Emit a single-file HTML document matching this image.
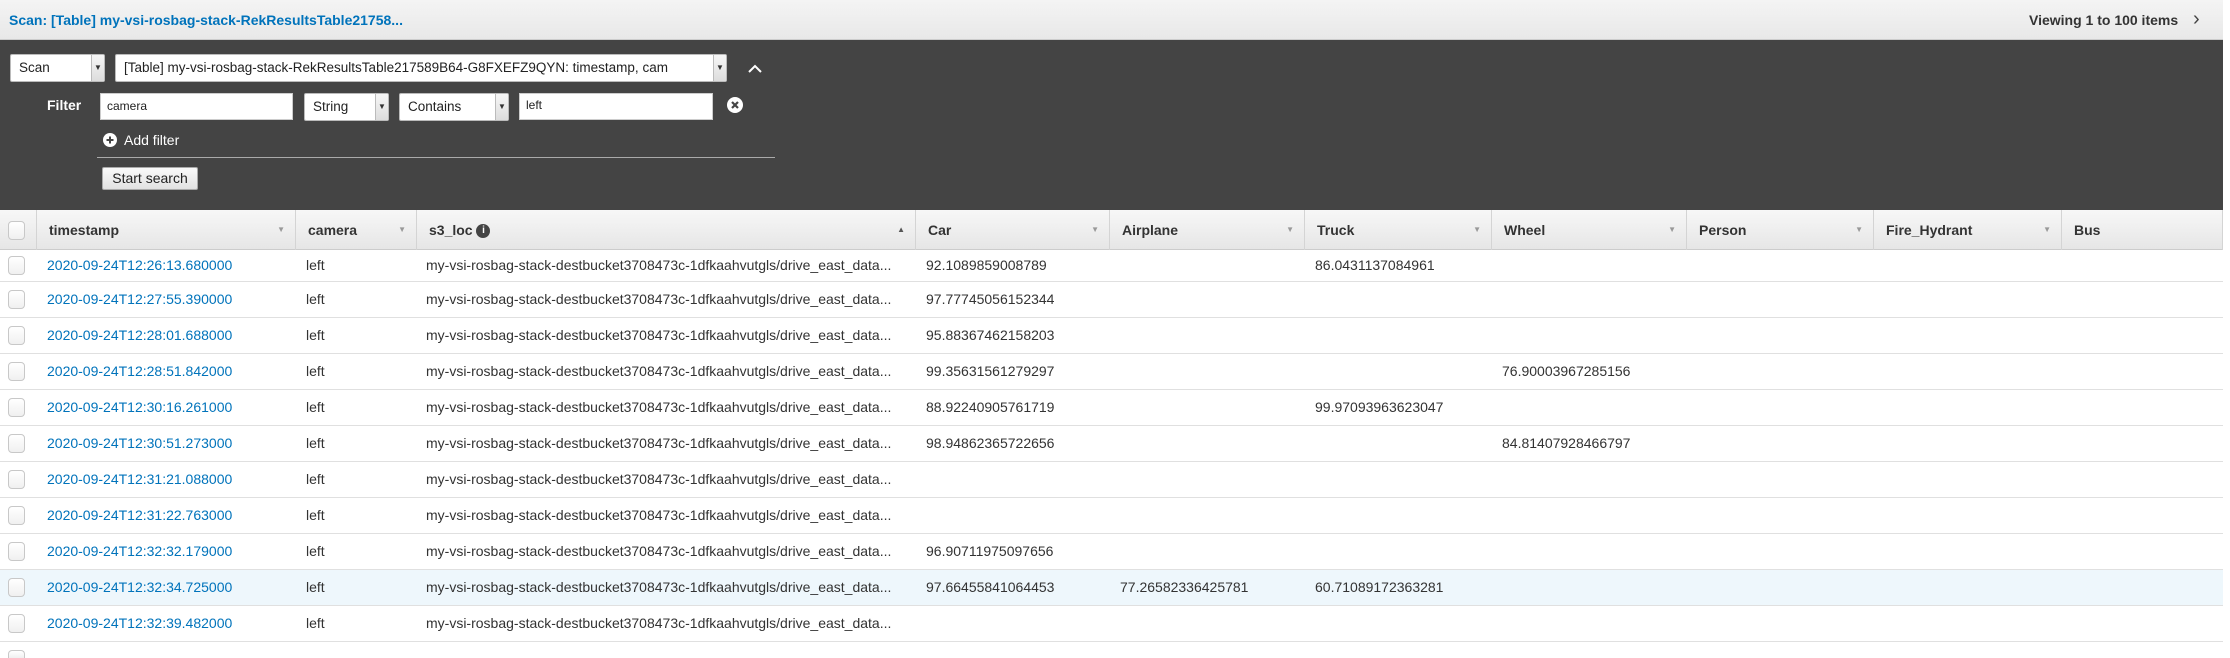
<!DOCTYPE html>
<html style="height:658px;overflow:hidden"><head><style>
*{box-sizing:border-box;margin:0;padding:0}
body{width:2230px;height:658px;overflow:hidden;background:#fff;font-family:"Liberation Sans",Arial,sans-serif;font-size:14px;color:#333;position:relative}
.abs{position:absolute}
.top{left:0;top:0;width:2223px;height:40px;background:linear-gradient(#f4f4f4,#e8e8e8);border-bottom:1px solid #ccc}
.dark{left:0;top:40px;width:2223px;height:170px;background:#444}
.sel{background:#fff;border:1px solid #bbb;border-radius:2px;height:28px;line-height:26px;padding-left:8px;font-size:13.5px;color:#222;overflow:hidden;white-space:nowrap}
.sel .c{position:absolute;right:0;top:0;width:13px;height:26px;background:linear-gradient(#f6f6f6,#ddd);border-left:1px solid #bbb;font-size:8px;text-align:center;line-height:26px;color:#333}
.inp{background:#fff;border:1px solid #ccc;height:27px;line-height:25px;padding-left:6px;font-size:12px;color:#222}
.hdr{left:0;top:210px;width:2223px;height:40px;background:linear-gradient(#f7f7f7,#e6e6e6);border-bottom:1px solid #ccc}
.hc{position:absolute;top:0;height:40px;border-left:1px solid #d4d4d4;font-weight:bold;line-height:40px;padding-left:12px;color:#333}
.hc .a{position:absolute;right:10px;top:0;font-size:8px;color:#999;font-weight:normal}
.row{position:absolute;left:0;width:2223px;height:36px;border-bottom:1px solid #e0e0e0}
.row span{position:absolute;top:0;line-height:35px;white-space:nowrap}
.cb{position:absolute;left:8px;width:17px;height:19px;border:1px solid #c8c8c8;border-radius:4px;background:linear-gradient(#fff,#f0f0f0)}
.lk{color:#0073bb}
</style></head><body>
<div class="abs top"></div>
<div class="abs" style="left:9px;top:12px;color:#0073bb;font-weight:bold;font-size:14px">Scan: [Table] my-vsi-rosbag-stack-RekResultsTable21758...</div>
<div class="abs" style="left:2029px;top:12px;font-weight:bold;font-size:14px;color:#333">Viewing 1 to 100 items</div>
<div class="abs" style="left:2193px;top:8px;font-size:20px;color:#444">&#8250;</div>
<div class="abs dark"></div>
<div class="abs sel" style="left:10px;top:54px;width:95px">Scan<div class="c">▼</div></div>
<div class="abs sel" style="left:115px;top:54px;width:612px">[Table] my-vsi-rosbag-stack-RekResultsTable217589B64-G8FXEFZ9QYN: timestamp, cam<div class="c">▼</div></div>
<svg class="abs" style="left:748px;top:64px" width="14" height="10"><path d="M1 8 L7 2 L13 8" stroke="#fff" stroke-width="2" fill="none"/></svg>
<div class="abs" style="left:47px;top:97px;color:#fff;font-weight:bold;font-size:14px">Filter</div>
<div class="abs inp" style="left:100px;top:93px;width:193px">camera</div>
<div class="abs sel" style="left:304px;top:93px;width:85px;height:28px">String<div class="c">▼</div></div>
<div class="abs sel" style="left:399px;top:93px;width:110px;height:28px">Contains<div class="c">▼</div></div>
<div class="abs inp" style="left:519px;top:93px;width:194px;line-height:22px">left</div>
<svg class="abs" style="left:727px;top:97px" width="16" height="16"><circle cx="8" cy="8" r="8" fill="#fff"/><path d="M5 5L11 11M11 5L5 11" stroke="#444" stroke-width="2.2"/></svg>
<svg class="abs" style="left:103px;top:133px" width="14" height="14"><circle cx="7" cy="7" r="7" fill="#fff"/><path d="M7 3.5V10.5M3.5 7H10.5" stroke="#444" stroke-width="2"/></svg>
<div class="abs" style="left:124px;top:132px;color:#fff;font-size:14px">Add filter</div>
<div class="abs" style="left:97px;top:157px;width:678px;height:1px;background:#aaa"></div>
<div class="abs" style="left:102px;top:167px;width:96px;height:23px;background:linear-gradient(#fafafa,#e2e2e2);border:1px solid #aaa;border-radius:2px;font-size:14px;line-height:21px;text-align:center;color:#222">Start search</div>
<div class="abs hdr">
<div class="cb" style="top:11px"></div>
<div class="hc" style="left:36px;width:259px">timestamp<span class="a">▼</span></div>
<div class="hc" style="left:295px;width:121px">camera<span class="a">▼</span></div>
<div class="hc" style="left:416px;width:499px">s3_loc <span style="display:inline-block;width:14px;height:14px;border-radius:7px;background:#444;color:#fff;font-size:10px;line-height:14px;text-align:center;vertical-align:middle">i</span><span class="a" style="color:#555">▲</span></div>
<div class="hc" style="left:915px;width:194px">Car<span class="a">▼</span></div>
<div class="hc" style="left:1109px;width:195px">Airplane<span class="a">▼</span></div>
<div class="hc" style="left:1304px;width:187px">Truck<span class="a">▼</span></div>
<div class="hc" style="left:1491px;width:195px">Wheel<span class="a">▼</span></div>
<div class="hc" style="left:1686px;width:187px">Person<span class="a">▼</span></div>
<div class="hc" style="left:1873px;width:188px">Fire_Hydrant<span class="a">▼</span></div>
<div class="hc" style="left:2061px;width:162px;border-right:1px solid #d4d4d4">Bus</div>
</div>
<div class="row" style="top:250px;height:32px"><div class="cb" style="top:6px"></div><span class="lk" style="left:47px;line-height:31px">2020-09-24T12:26:13.680000</span><span style="left:306px;line-height:31px">left</span><span style="left:426px;line-height:31px">my-vsi-rosbag-stack-destbucket3708473c-1dfkaahvutgls/drive_east_data...</span><span style="left:926px;line-height:31px">92.1089859008789</span><span style="left:1315px;line-height:31px">86.0431137084961</span></div>
<div class="row" style="top:282px"><div class="cb" style="top:8px"></div><span class="lk" style="left:47px">2020-09-24T12:27:55.390000</span><span style="left:306px">left</span><span style="left:426px">my-vsi-rosbag-stack-destbucket3708473c-1dfkaahvutgls/drive_east_data...</span><span style="left:926px">97.77745056152344</span></div>
<div class="row" style="top:318px"><div class="cb" style="top:8px"></div><span class="lk" style="left:47px">2020-09-24T12:28:01.688000</span><span style="left:306px">left</span><span style="left:426px">my-vsi-rosbag-stack-destbucket3708473c-1dfkaahvutgls/drive_east_data...</span><span style="left:926px">95.88367462158203</span></div>
<div class="row" style="top:354px"><div class="cb" style="top:8px"></div><span class="lk" style="left:47px">2020-09-24T12:28:51.842000</span><span style="left:306px">left</span><span style="left:426px">my-vsi-rosbag-stack-destbucket3708473c-1dfkaahvutgls/drive_east_data...</span><span style="left:926px">99.35631561279297</span><span style="left:1502px">76.90003967285156</span></div>
<div class="row" style="top:390px"><div class="cb" style="top:8px"></div><span class="lk" style="left:47px">2020-09-24T12:30:16.261000</span><span style="left:306px">left</span><span style="left:426px">my-vsi-rosbag-stack-destbucket3708473c-1dfkaahvutgls/drive_east_data...</span><span style="left:926px">88.92240905761719</span><span style="left:1315px">99.97093963623047</span></div>
<div class="row" style="top:426px"><div class="cb" style="top:8px"></div><span class="lk" style="left:47px">2020-09-24T12:30:51.273000</span><span style="left:306px">left</span><span style="left:426px">my-vsi-rosbag-stack-destbucket3708473c-1dfkaahvutgls/drive_east_data...</span><span style="left:926px">98.94862365722656</span><span style="left:1502px">84.81407928466797</span></div>
<div class="row" style="top:462px"><div class="cb" style="top:8px"></div><span class="lk" style="left:47px">2020-09-24T12:31:21.088000</span><span style="left:306px">left</span><span style="left:426px">my-vsi-rosbag-stack-destbucket3708473c-1dfkaahvutgls/drive_east_data...</span></div>
<div class="row" style="top:498px"><div class="cb" style="top:8px"></div><span class="lk" style="left:47px">2020-09-24T12:31:22.763000</span><span style="left:306px">left</span><span style="left:426px">my-vsi-rosbag-stack-destbucket3708473c-1dfkaahvutgls/drive_east_data...</span></div>
<div class="row" style="top:534px"><div class="cb" style="top:8px"></div><span class="lk" style="left:47px">2020-09-24T12:32:32.179000</span><span style="left:306px">left</span><span style="left:426px">my-vsi-rosbag-stack-destbucket3708473c-1dfkaahvutgls/drive_east_data...</span><span style="left:926px">96.90711975097656</span></div>
<div class="row" style="top:570px;background:#eef7fc"><div class="cb" style="top:8px"></div><span class="lk" style="left:47px">2020-09-24T12:32:34.725000</span><span style="left:306px">left</span><span style="left:426px">my-vsi-rosbag-stack-destbucket3708473c-1dfkaahvutgls/drive_east_data...</span><span style="left:926px">97.66455841064453</span><span style="left:1120px">77.26582336425781</span><span style="left:1315px">60.71089172363281</span></div>
<div class="row" style="top:606px"><div class="cb" style="top:8px"></div><span class="lk" style="left:47px">2020-09-24T12:32:39.482000</span><span style="left:306px">left</span><span style="left:426px">my-vsi-rosbag-stack-destbucket3708473c-1dfkaahvutgls/drive_east_data...</span></div>
<div class="row" style="top:642px;height:16px;border-bottom:none"><div class="cb" style="top:8px;height:8px;border-bottom:none;border-radius:4px 4px 0 0"></div></div>
</body></html>
